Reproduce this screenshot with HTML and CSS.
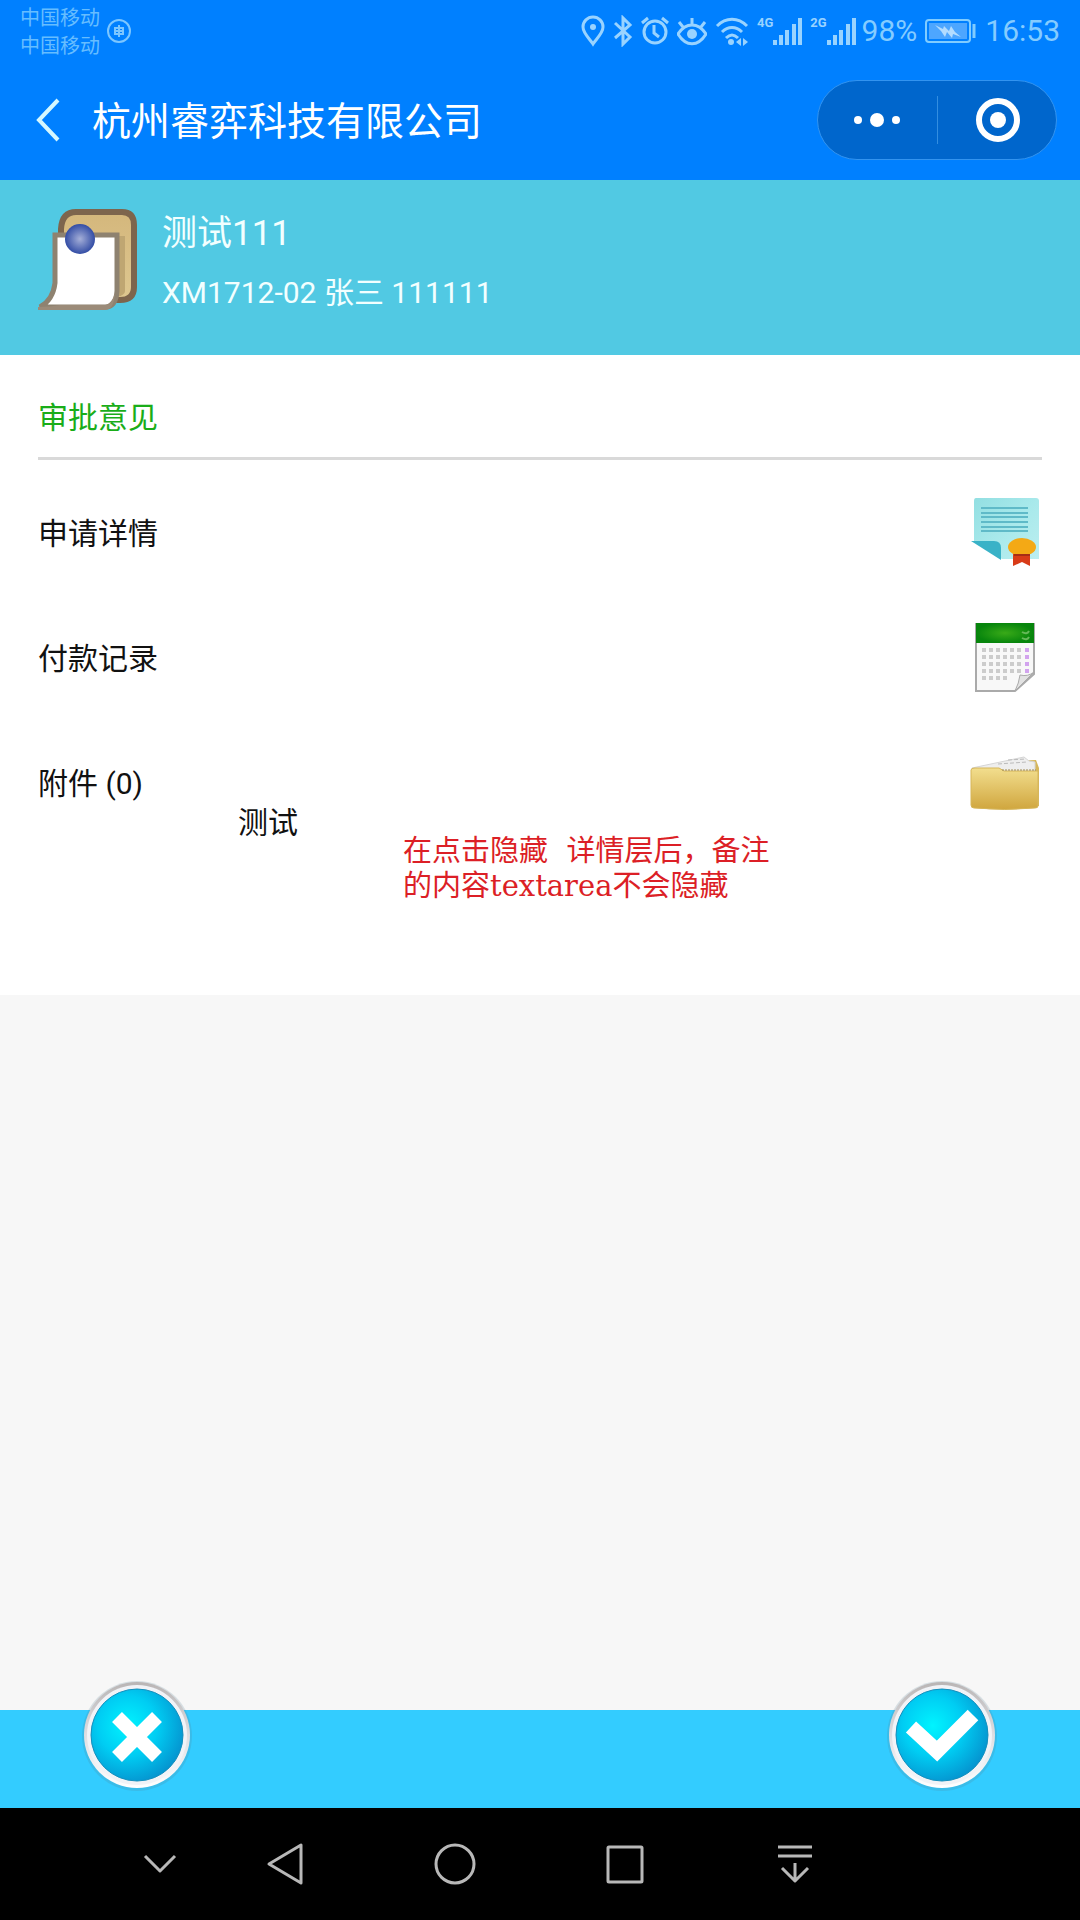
FILE: index.html
```html
<!DOCTYPE html>
<html lang="zh-CN">
<head>
    <meta charset="UTF-8">
    <meta name="viewport" content="width=device-width, initial-scale=1.0">
    <title>审批意见</title>
    <link rel="stylesheet" href="styles.css">
</head>
<body>
    <header class="top">
        <div class="status">
            <div class="carrier">
                <span>中国移动</span>
                <span>中国移动</span>
            </div>
            <svg class="globe" width="26" height="26" viewBox="0 0 26 26">
                <circle cx="13" cy="13" r="11"/>
                <path d="M13 7v12M9 10h8v6H9zM9 13h8"/>
            </svg>
            <div class="status-icons">
                <svg width="24" height="32" viewBox="0 0 24 32">
                    <path d="M12 29C8 23 2 18 2 12a10 10 0 0 1 20 0c0 6-6 11-10 17z"/>
                    <circle class="solid" cx="12" cy="12" r="3"/>
                </svg>
                <svg width="20" height="32" viewBox="0 0 20 32">
                    <path d="M2 8l15 14-7 7V3l7 7L2 23"/>
                </svg>
                <svg width="28" height="32" viewBox="0 0 28 32">
                    <circle cx="14" cy="17" r="11"/>
                    <path d="M13 10v8l5 4M1 8l6-5M27 8l-6-5"/>
                </svg>
                <svg width="30" height="32" viewBox="0 0 30 32">
                    <path d="M1 19c8-12 20-12 28 0-8 13-20 13-28 0zM15 3v6M2 7l4 5M28 7l-4 5"/>
                    <circle class="solid" cx="15" cy="19" r="5"/>
                </svg>
                <svg width="34" height="32" viewBox="0 0 34 32">
                    <path d="M2 11c9-9 21-9 30 0M7 17c6-6 14-6 20 0M11 23c4-4 8-4 12 0"/>
                    <circle class="solid" cx="16" cy="27" r="3"/>
                    <path class="solid" d="M21 27l5-4v8zM33 27l-5-4v8z"/>
                </svg>
                <div class="signal">
                    <span>4G</span>
                    <svg width="29" height="32" viewBox="1 0 29 32">
                        <path class="bars" d="M3 25v5M9 20v10M15 15v15M22 9v21M28 3v27"/>
                    </svg>
                </div>
                <div class="signal">
                    <span>2G</span>
                    <svg width="29" height="32" viewBox="1 0 29 32">
                        <path class="bars" d="M3 25v5M9 20v10M15 15v15M22 9v21M28 3v27"/>
                    </svg>
                </div>
            </div>
            <span class="percent">98%</span>
            <svg class="battery" width="52" height="26" viewBox="0 0 52 26">
                <rect class="shell" x="1" y="2" width="44" height="22" rx="3"/>
                <rect class="charge" x="4" y="5" width="38" height="16"/>
                <path class="bolt" d="M10 7l8 4 1-3 5 5 2-5 4 6 6 5-8-3-1 4-5-6-2 5-4-6z"/>
                <path class="tip" d="M49 6v14"/>
            </svg>
            <span class="time">16:53</span>
        </div>
        <div class="title-bar">
            <button class="back" type="button" aria-label="返回">
                <svg width="28" height="46" viewBox="0 0 28 46"><path d="M24 3L5 23l19 20"/></svg>
            </button>
            <h1>杭州睿弈科技有限公司</h1>
            <div class="capsule">
                <button type="button" aria-label="更多">
                    <svg width="48" height="48" viewBox="0 0 48 48">
                        <circle cx="5" cy="24" r="4"/>
                        <circle cx="24" cy="24" r="7"/>
                        <circle cx="43" cy="24" r="4"/>
                    </svg>
                </button>
                <button type="button" aria-label="关闭">
                    <svg width="48" height="48" viewBox="0 0 48 48">
                        <circle class="ring" cx="25" cy="24" r="19"/>
                        <circle cx="25" cy="24" r="8"/>
                    </svg>
                </button>
            </div>
        </div>
    </header>

    <section class="project">
        <svg class="project-icon" width="104" height="104" viewBox="0 0 104 104">
            <defs>
                <radialGradient id="pin">
                    <stop offset="0" stop-color="#a5afd8"/>
                    <stop offset="1" stop-color="#334da5"/>
                </radialGradient>
                <linearGradient id="board" x1="0" y1="0" x2="0" y2="1">
                    <stop offset="0" stop-color="#d4b77c"/>
                    <stop offset="1" stop-color="#dec790"/>
                </linearGradient>
            </defs>
            <path d="M25 20Q26 3 40 3h46q12 0 12 13v62q0 13-14 13H70L25 70z" fill="url(#board)" stroke="#7d654d" stroke-width="6"/>
            <path d="M82 27h7v55q0 4-8 6z" fill="#bfa672"/>
            <path d="M19 26h62v56q-1 16-12 16H4q13-7 15-24z" fill="#fff" stroke="#8e8270" stroke-width="5"/>
            <path d="M2 98q12 0 22-2h46q6-2 9-12-1 17-10 17H2z" fill="#9b8b79"/>
            <circle cx="44" cy="30" r="15" fill="url(#pin)"/>
        </svg>
        <div class="project-text">
            <h2>测试111</h2>
            <p>XM1712-02 张三 111111</p>
        </div>
    </section>

    <main class="panel">
        <h3>审批意见</h3>
        <nav class="rows">
            <a href="#detail">
                <span>申请详情</span>
                <svg width="72" height="72" viewBox="0 0 72 72">
                    <defs>
                        <linearGradient id="sheet" x1="0" y1="0" x2="1" y2="1">
                            <stop offset="0" stop-color="#92dfe2"/>
                            <stop offset="0.5" stop-color="#a8e9eb"/>
                            <stop offset="1" stop-color="#bceef0"/>
                        </linearGradient>
                    </defs>
                    <path d="M6 0h60q3 0 3 3v58H32L4 43V3q0-3 2-3z" fill="url(#sheet)"/>
                    <path d="M11 10h47M11 15h47M11 19h47M11 24h47M11 29h47M11 33h47" stroke="#5fbac8" stroke-width="2"/>
                    <path d="M1 43h23q7 0 7 7v12z" fill="#39b2c7"/>
                    <path d="M43 54h17v14l-8-4-9 4z" fill="#d83b18"/>
                    <ellipse cx="52" cy="49" rx="14" ry="9" fill="#f4a915"/>
                    <path d="M44 57h16" stroke="#a62d16" stroke-width="2"/>
                </svg>
            </a>
            <a href="#payments">
                <span>付款记录</span>
                <svg width="72" height="72" viewBox="0 0 72 72">
                    <defs>
                        <radialGradient id="cal-head">
                            <stop offset="0" stop-color="#39aa18"/>
                            <stop offset="1" stop-color="#07850c"/>
                        </radialGradient>
                    </defs>
                    <path d="M6 1h58v50L45 68H6z" fill="#f8f8f8" stroke="#aaa" stroke-width="2"/>
                    <path d="M6 0h58v20H6z" fill="url(#cal-head)"/>
                    <path d="M52 9q5 3 7-1M52 15q5 3 7-1" stroke="#65b958" stroke-width="2" fill="none"/>
                    <path d="M12 27h41M12 34h41M12 41h41M12 48h41M12 55h26" stroke="#ccc" stroke-width="4" stroke-dasharray="4 3"/>
                    <path d="M55 27h4M55 34h4M55 41h4M55 48h4" stroke="#d2a3ee" stroke-width="4"/>
                    <path d="M45 68q4-8 5-16 8 2 14-3z" fill="#e2e2e2" stroke="#aaa"/>
                </svg>
            </a>
            <a href="#files">
                <span>附件 (0)</span>
                <svg width="72" height="72" viewBox="0 0 72 72">
                    <defs>
                        <linearGradient id="folder" x1="0" y1="0" x2="0" y2="1">
                            <stop offset="0" stop-color="#f2de8e"/>
                            <stop offset="1" stop-color="#d0a63e"/>
                        </linearGradient>
                    </defs>
                    <path d="M42 13l24-1 3 8v38H38z" fill="#d6b75c"/>
                    <path d="M2 20L54 9l5 4 6 1v12H2z" fill="#eee" stroke="#d5d5d5"/>
                    <path d="M28 16l29-2M38 12l18-1" stroke="#bbb" stroke-dasharray="4 2"/>
                    <path d="M1 22q0-2 4-2h24l5 3h34v35q0 2-3 2-30 3-61 0-3 0-3-3z" fill="url(#folder)" stroke="#d6b65a"/>
                    <path d="M32 22h34" stroke="#9e8a52" stroke-dasharray="2 1"/>
                </svg>
            </a>
        </nav>
        <textarea class="remark" rows="1" aria-label="备注" spellcheck="false">测试</textarea>
        <p class="note">在点击隐藏&nbsp; 详情层后，备注<br>的内容textarea不会隐藏</p>
    </main>

    <footer class="actions">
        <button type="button" aria-label="拒绝">
            <svg width="120" height="120" viewBox="0 0 120 120">
                <defs>
                    <radialGradient id="glow" cx="0.4" cy="0.4" r="0.65">
                        <stop offset="0" stop-color="#00f4ff"/>
                        <stop offset="0.5" stop-color="#00cdf3"/>
                        <stop offset="1" stop-color="#0592ce"/>
                    </radialGradient>
                    <linearGradient id="rim" x1="0" y1="0" x2="0" y2="1">
                        <stop offset="0" stop-color="#b9b5b5"/>
                        <stop offset="0.5" stop-color="#dedee2"/>
                        <stop offset="1" stop-color="#fff"/>
                    </linearGradient>
                </defs>
                <circle cx="60" cy="61" r="55" fill="#557b91" opacity="0.2"/>
                <circle cx="60" cy="60" r="53" fill="url(#rim)"/>
                <circle cx="60" cy="60" r="50" fill="#f1f3f7"/>
                <circle cx="60" cy="60" r="46" fill="url(#glow)" stroke="#148fbd"/>
                <path d="M40 42l40 40M80 42L40 82" stroke="#fff" stroke-width="14"/>
            </svg>
        </button>
        <button type="button" aria-label="同意">
            <svg width="120" height="120" viewBox="0 0 120 120">
                <circle cx="60" cy="61" r="55" fill="#557b91" opacity="0.2"/>
                <circle cx="60" cy="60" r="53" fill="url(#rim)"/>
                <circle cx="60" cy="60" r="50" fill="#f1f3f7"/>
                <circle cx="60" cy="60" r="46" fill="url(#glow)" stroke="#148fbd"/>
                <path d="M29 52l26 24 36-36" fill="none" stroke="#fff" stroke-width="15"/>
            </svg>
        </button>
    </footer>

    <nav class="system-nav">
        <button type="button" aria-label="收起">
            <svg width="48" height="48" viewBox="0 0 48 48"><path d="M9 16l15 15 15-15"/></svg>
        </button>
        <button type="button" aria-label="后退">
            <svg width="48" height="48" viewBox="0 0 48 48"><path d="M40 5v38L8 24z"/></svg>
        </button>
        <button type="button" aria-label="主页">
            <svg width="48" height="48" viewBox="0 0 48 48"><circle cx="24" cy="24" r="19"/></svg>
        </button>
        <button type="button" aria-label="最近任务">
            <svg width="48" height="48" viewBox="0 0 48 48"><rect x="7" y="7" width="34" height="35" rx="1"/></svg>
        </button>
        <button type="button" aria-label="通知栏">
            <svg width="48" height="48" viewBox="0 0 48 48"><path d="M7 7h34M7 16h34M24 23v17M11 28l13 13 13-13"/></svg>
        </button>
    </nav>
</body>
</html>
```

FILE: styles.css
```css
* {
    box-sizing: border-box;
}
body {
    display: flex;
    flex-direction: column;
    min-height: 100vh;
    margin: 0;
    background-color: #f7f7f7;
    color: #111;
    font-family: Roboto, "Noto Sans CJK SC", sans-serif;
    font-size: 30px;
}
h1, h2, h3, p {
    margin: 0;
    font-weight: normal;
}
button {
    display: flex;
    align-items: center;
    justify-content: center;
    padding: 0;
    border: 0;
    background: none;
}
svg {
    display: block;
    flex-shrink: 0;
}

/* status bar and title */
.top {
    background-color: #0080ff;
}
.status {
    display: flex;
    align-items: center;
    height: 60px;
    padding: 2px 20px 0;
    color: #85ccff;
    line-height: 36px;
}
.carrier {
    display: flex;
    flex-direction: column;
    padding-top: 2px;
    color: #66bdff;
    font-size: 20px;
    line-height: 28px;
}
.globe {
    margin-left: 6px;
    fill: none;
    stroke: #7cc6ff;
    stroke-width: 2;
}
.status-icons {
    display: flex;
    gap: 8px;
    margin-left: auto;
    fill: none;
    stroke: #99d3ff;
    stroke-width: 3;
}
.status-icons .solid {
    fill: #99d3ff;
    stroke: none;
}
.status-icons .bars {
    stroke-width: 4;
}
.signal {
    display: flex;
}
.signal span {
    color: #99d3ff;
    font-size: 13px;
    font-weight: bold;
    line-height: 16px;
}
.percent {
    margin-left: 6px;
}
.battery {
    margin: 0 8px;
}
.shell {
    fill: none;
    stroke: #80ccff;
    stroke-width: 2;
}
.charge {
    fill: #4da6ff;
}
.bolt {
    fill: #b3dcff;
}
.tip {
    stroke: #80ccff;
    stroke-width: 3;
}
.title-bar {
    display: flex;
    align-items: center;
    height: 120px;
    padding: 0 23px 0 34px;
}
.back svg {
    fill: none;
    stroke: #d5f8ff;
    stroke-width: 4;
}
.title-bar h1 {
    margin-left: 30px;
    padding-top: 4px;
    color: #fff;
    font-size: 39px;
    line-height: 48px;
}
.capsule {
    display: flex;
    align-items: center;
    width: 240px;
    height: 80px;
    margin-left: auto;
    border: 1px solid #3394f0;
    border-radius: 40px;
    background-color: #0066cc;
}
.capsule button {
    flex: 1;
    height: 48px;
}
.capsule button + button {
    border-left: 1px solid #338ee0;
}
.capsule svg {
    fill: #fff;
}
.capsule .ring {
    fill: none;
    stroke: #fff;
    stroke-width: 6;
}

/* project summary */
.project {
    display: flex;
    align-items: flex-start;
    gap: 22px;
    padding: 29px 36px 40px;
    background-color: #51c9e3;
    color: #f2ffff;
}
.project-text {
    padding-bottom: 4px;
}
.project-text h2 {
    font-size: 35px;
    line-height: 50px;
}
.project-text p {
    margin-top: 16px;
    line-height: 36px;
}

/* approval panel */
.panel {
    position: relative;
    padding: 45px 38px 149px;
    background-color: #fff;
}
.panel h3 {
    padding-bottom: 21px;
    border-bottom: 3px solid #d9d9d9;
    color: #1aad19;
    font-size: 30px;
    line-height: 36px;
}
.rows {
    padding-top: 11px;
    line-height: 36px;
}
.rows a {
    display: flex;
    align-items: center;
    justify-content: space-between;
    height: 125px;
    color: #111;
    text-decoration: none;
}
/* the remark box stays on top of the rows */
.remark {
    position: absolute;
    top: 450px;
    left: 238px;
    width: 160px;
    height: 36px;
    padding: 0;
    border: 0;
    background: none;
    color: #111;
    font: inherit;
    line-height: 36px;
    resize: none;
    overflow: hidden;
}
.note {
    position: absolute;
    top: 479px;
    left: 403px;
    color: #dc1f26;
    font-family: "DejaVu Serif", "Noto Sans CJK SC", serif;
    font-size: 29px;
    line-height: 35px;
    white-space: nowrap;
}

/* bottom bars */
.actions {
    display: flex;
    justify-content: space-between;
    height: 98px;
    margin-top: auto;
    padding: 0 78px 0 77px;
    background-color: #33ccff;
}
.actions button {
    height: 120px;
    margin-top: -35px;
}
.system-nav {
    display: grid;
    grid-template-columns: 12fr 8fr repeat(4, 17fr) 20fr;
    height: 112px;
    background-color: #000;
}
.system-nav button:first-child {
    grid-column: 2;
}
.system-nav svg {
    fill: none;
    stroke: #b8b8b8;
    stroke-width: 3;
    stroke-linejoin: round;
}
```
